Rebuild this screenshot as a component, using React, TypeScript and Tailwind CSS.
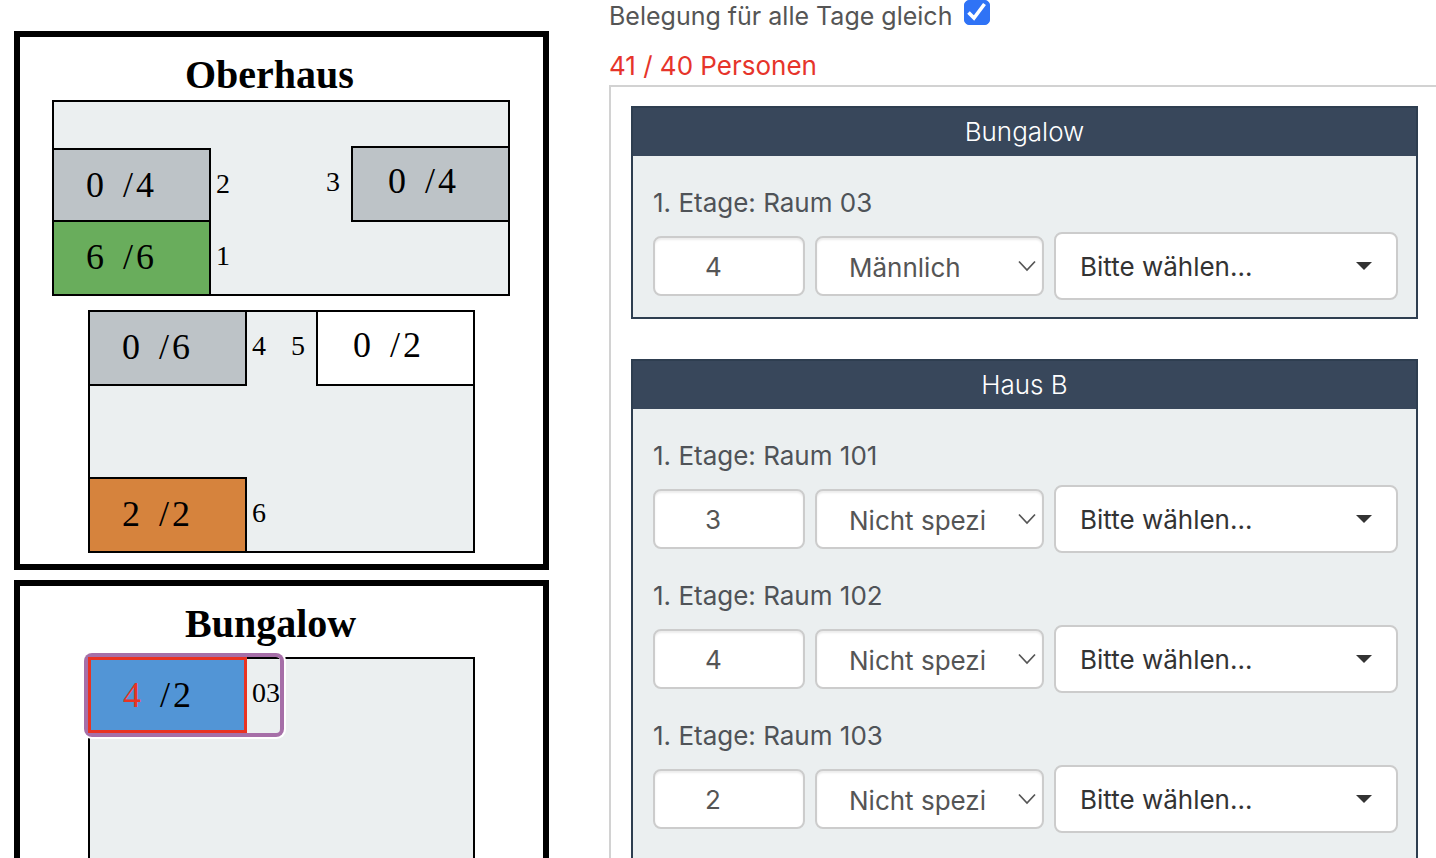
import React, { useState } from 'react';
import clsx from 'clsx';

type Side = 'left' | 'right';

interface PlanRoom {
  name: string;
  count: number;
  capacity: number;
  side: Side;
  position: string;
  color: string;
  selected?: boolean;
}

interface BookingRoom {
  id: string;
  label: string;
  persons: number;
  gender: string;
}

const upperFloor: PlanRoom[] = [
  { name: '2', count: 0, capacity: 4, side: 'left', position: '-left-0.5 top-[46px]', color: 'bg-[#bdc3c7]' },
  { name: '1', count: 6, capacity: 6, side: 'left', position: '-left-0.5 -bottom-0.5', color: 'bg-[#69ad5c]' },
  { name: '3', count: 0, capacity: 4, side: 'right', position: '-right-0.5 top-11', color: 'bg-[#bdc3c7]' },
];

const lowerFloor: PlanRoom[] = [
  { name: '4', count: 0, capacity: 6, side: 'left', position: '-left-0.5 -top-0.5', color: 'bg-[#bdc3c7]' },
  { name: '5', count: 0, capacity: 2, side: 'right', position: '-right-0.5 -top-0.5', color: 'bg-white' },
  { name: '6', count: 2, capacity: 2, side: 'left', position: '-left-0.5 -bottom-0.5', color: 'bg-[#d6833d]' },
];

const bungalow: PlanRoom[] = [
  { name: '03', count: 4, capacity: 2, side: 'left', position: '-left-0.5 -top-0.5', color: 'bg-[#5295d6]', selected: true },
];

const houses: { name: string; rooms: BookingRoom[] }[] = [
  {
    name: 'Bungalow',
    rooms: [{ id: 'r03', label: '1. Etage: Raum 03', persons: 4, gender: 'Männlich' }],
  },
  {
    name: 'Haus B',
    rooms: [
      { id: 'r101', label: '1. Etage: Raum 101', persons: 3, gender: 'Nicht spezifiziert' },
      { id: 'r102', label: '1. Etage: Raum 102', persons: 4, gender: 'Nicht spezifiziert' },
      { id: 'r103', label: '1. Etage: Raum 103', persons: 2, gender: 'Nicht spezifiziert' },
    ],
  },
];

const Room: React.FC<{ room: PlanRoom }> = ({ room }) => {
  const full = room.count > room.capacity;

  return (
    <button
      type="button"
      className={clsx(
        'absolute flex items-start text-black',
        room.position,
        room.side === 'right' && 'flex-row-reverse',
        room.selected && 'rounded-sm shadow-[0_0_0_4px_#a66fa8,0_0_0_6px_#ffffff]'
      )}
    >
      <span
        className={clsx(
          'flex h-[76px] w-[159px] text-[36px] leading-10',
          room.side === 'right' ? 'pl-[35px] pt-[13px]' : 'pl-8 pt-[15px]',
          full ? 'border-3 border-[#e93323]' : 'border-2 border-black',
          room.color
        )}
      >
        <span className={clsx('mr-[19px]', full && 'text-[#e93323]')}>{room.count}</span>
        <span className="mr-[3px]">/</span>
        <span>{room.capacity}</span>
      </span>
      <span className={clsx('pt-5 text-[28px] leading-8', room.side === 'right' ? 'pr-[11px]' : 'pl-[5px]')}>
        {room.name}
      </span>
    </button>
  );
};

const Floor: React.FC<{ rooms: PlanRoom[]; className: string }> = ({ rooms, className }) => (
  <div className={clsx('relative border-2 border-black bg-[#ebeff0]', className)}>
    {rooms.map(room => (
      <Room key={room.name} room={room} />
    ))}
  </div>
);

const Building: React.FC<{ title: string; children: React.ReactNode }> = ({ title, children }) => (
  <section className="border-6 border-black bg-white pb-[11px] pt-4">
    <h2 className="pl-[165px] text-[40px] font-bold leading-[44px] text-black">{title}</h2>
    {children}
  </section>
);

const BookingRow: React.FC<{ room: BookingRoom }> = ({ room }) => {
  const [persons, setPersons] = useState(String(room.persons));
  const [gender, setGender] = useState(room.gender);

  return (
    <div className="pt-[25px]">
      <label htmlFor={room.id} className="mb-[11px] block leading-9 text-[#4f5358]">
        {room.label}
      </label>
      <div className="flex items-center gap-2.5">
        <input
          id={room.id}
          type="text"
          inputMode="numeric"
          value={persons}
          onChange={e => setPersons(e.target.value)}
          className="h-[60px] w-[152px] rounded-lg border-2 border-[#ccc] bg-white pl-[50px] pr-4 text-[#555] shadow-[inset_0_2px_2px_rgba(0,0,0,0.08)] outline-none"
        />
        <div className="relative">
          <select
            aria-label={`Geschlecht ${room.label}`}
            value={gender}
            onChange={e => setGender(e.target.value)}
            className="block h-[60px] w-[229px] appearance-none rounded-lg border-2 border-[#ccc] bg-white pl-8 pr-[57px] pt-0.5 text-[#555] shadow-[inset_0_2px_2px_rgba(0,0,0,0.08)] outline-none"
          >
            <option>Nicht spezifiziert</option>
            <option>Männlich</option>
            <option>Weiblich</option>
          </select>
          <svg
            className="pointer-events-none absolute right-2 top-6 h-3 w-[18px]"
            viewBox="0 0 18 12"
            fill="none"
            stroke="#555"
            strokeWidth="1.7"
          >
            <path d="M1 1.5 9 10l8-8.5" />
          </svg>
        </div>
        <button
          type="button"
          className="flex h-[68px] flex-1 items-center justify-between rounded-lg border-2 border-[#ccc] bg-white pl-6 pr-6 text-[#333]"
        >
          <span>Bitte wählen...</span>
          <svg className="h-2 w-4" viewBox="0 0 16 8" fill="#333">
            <path d="M0 0h16L8 8z" />
          </svg>
        </button>
      </div>
    </div>
  );
};

const App: React.FC = () => {
  const [sameForAll, setSameForAll] = useState(true);

  return (
    <div className="flex h-screen items-start gap-[60px] overflow-hidden bg-white pl-3.5">
      {/* Floor plans */}
      <div className="flex w-[535px] shrink-0 flex-col gap-2.5 pt-[31px] font-['Liberation_Serif',serif]">
        <Building title="Oberhaus">
          <Floor rooms={upperFloor} className="ml-8 mt-[3px] h-[196px] w-[458px]" />
          <Floor rooms={lowerFloor} className="ml-[68px] mt-3.5 h-[243px] w-[387px]" />
        </Building>
        <Building title="Bungalow">
          <Floor rooms={bungalow} className="ml-[68px] mt-[11px] h-[243px] w-[387px]" />
        </Building>
      </div>

      {/* Booking form */}
      <main className="min-w-0 flex-1 font-['Inter',sans-serif] text-[26px]">
        <div className="flex items-start gap-3 leading-8 text-[#555]">
          <label htmlFor="same-for-all" className="text-[25px] leading-8">
            Belegung für alle Tage gleich
          </label>
          <span className="relative">
            <input
              id="same-for-all"
              type="checkbox"
              checked={sameForAll}
              onChange={e => setSameForAll(e.target.checked)}
              className="block h-[25px] w-[26px] appearance-none rounded-[5px] border border-[#999] bg-white checked:border-[#2f73f6] checked:bg-[#2f73f6]"
            />
            {sameForAll && (
              <svg
                className="pointer-events-none absolute left-0 top-0 h-[25px] w-[26px]"
                viewBox="0 0 26 25"
                fill="none"
                stroke="#fff"
                strokeWidth="3.6"
              >
                <path d="M4.5 12.5 10 18 20.5 4" />
              </svg>
            )}
          </span>
        </div>
        <p className="mt-[18px] leading-8 text-[#e6342a]">41 / 40 Personen</p>

        <div className="mt-[3px] flex flex-col gap-10 border-l-2 border-t-2 border-[#d2d2d2] pb-10 pl-5 pr-[18px] pt-[19px]">
          {houses.map(house => (
            <section key={house.name} className="border-2 border-[#2e3e50] bg-[#ebeff0] last:pb-6">
              <h3 className="bg-[#38475b] text-center font-light leading-[48px] text-white">{house.name}</h3>
              <div className="pb-[17px] pl-5 pr-[18px] pt-1">
                {house.rooms.map(room => (
                  <BookingRow key={room.id} room={room} />
                ))}
              </div>
            </section>
          ))}
        </div>
      </main>
    </div>
  );
};

export default App;
